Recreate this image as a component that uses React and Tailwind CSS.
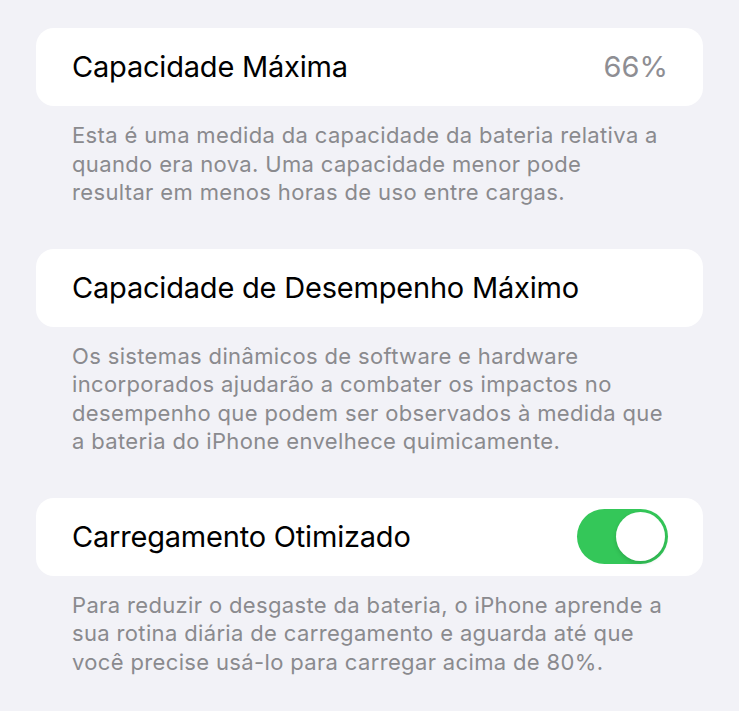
const SECTIONS = [
  {
    title: 'Capacidade Máxima',
    value: '66%',
    lines: [
      'Esta é uma medida da capacidade da bateria relativa a',
      'quando era nova. Uma capacidade menor pode',
      'resultar em menos horas de uso entre cargas.',
    ],
  },
  {
    title: 'Capacidade de Desempenho Máximo',
    lines: [
      'Os sistemas dinâmicos de software e hardware',
      'incorporados ajudarão a combater os impactos no',
      'desempenho que podem ser observados à medida que',
      'a bateria do iPhone envelhece quimicamente.',
    ],
  },
  {
    title: 'Carregamento Otimizado',
    toggle: true,
    lines: [
      'Para reduzir o desgaste da bateria, o iPhone aprende a',
      'sua rotina diária de carregamento e aguarda até que',
      'você precise usá-lo para carregar acima de 80%.',
    ],
  },
];

const Toggle = () => (
  <div className="flex h-[55px] w-[91px] items-center justify-end rounded-full bg-[#34c759] p-[3px]">
    <div className="h-[49px] w-[49px] rounded-full bg-white shadow-[0_2px_4px_rgba(0,0,0,0.15)]" />
  </div>
);

const App = () => {
  return (
    <div className="min-h-[711px] w-full bg-[#f2f2f7] pt-[28px] font-['Inter','Noto_Sans',sans-serif]">
      <div className="flex flex-col gap-[42px] pl-[36px]">
        {SECTIONS.map(section => (
          <div key={section.title} className="w-[667px]">
            <div className="flex h-[78px] items-center justify-between rounded-[18px] bg-white pl-[36px] pr-[35px]">
              <span className="text-[29px] tracking-[-0.2px] text-black">{section.title}</span>
              {section.value && <span className="text-[29px] text-[#8e8e93]">{section.value}</span>}
              {section.toggle && <Toggle />}
            </div>
            <div className="pl-[36px] pt-[15px] text-[22px] leading-[28.5px] tracking-[0.35px] text-[#8a8a8e]">
              {section.lines.map(line => (
                <div key={line} className="whitespace-nowrap">{line}</div>
              ))}
            </div>
          </div>
        ))}
      </div>
    </div>
  );
};

export default App;
